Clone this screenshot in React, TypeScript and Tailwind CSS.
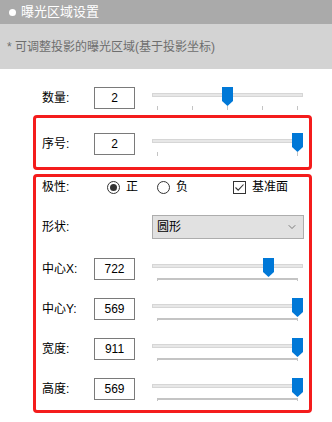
import { ChevronDown } from "lucide-react";

const FONT = "font-['Liberation_Sans','Noto_Sans_CJK_SC',sans-serif]";

interface SliderProps {
  value: number; // 0..1
  ticks?: number;
  bar?: boolean;
}

function Slider({ value, ticks = 5, bar = false }: SliderProps) {
  return (
    <div className="relative ml-[17px] w-[151px] shrink-0 flex flex-col">
      <div className="mt-[6px] h-[4px] bg-[#e7e7e7] border border-[#d6d6d6]" />
      {bar ? (
        <div className="mt-[10px] mx-[5px] flex flex-col">
          <div className="h-[2px] bg-[#c4c4c4]" />
          <div className="flex justify-between">
            <div className="w-px h-px bg-[#c4c4c4]" />
            <div className="w-px h-px bg-[#c4c4c4]" />
          </div>
        </div>
      ) : (
        <div className="mt-[9px] mx-[5px] flex justify-between">
          {Array.from({ length: ticks }).map((_, i) => (
            <div key={i} className="w-px h-[4px] bg-[#c4c4c4]" />
          ))}
        </div>
      )}
      {/* thumb */}
      <svg
        width="11"
        height="19"
        viewBox="0 0 11 19"
        className="absolute top-0"
        style={{ left: 140 * value }}
      >
        <path d="M0 0H11V14L5.5 19L0 14Z" fill="#0078d7" />
      </svg>
    </div>
  );
}

function NumBox({ value }: { value: string }) {
  return (
    <div className="w-[41px] h-[22px] shrink-0 border border-[#7a7a7a] flex items-center justify-center text-[12px] text-black">
      {value}
    </div>
  );
}

function SliderRow({ label, value, pos, ticks, bar }: { label: string; value: string; pos: number; ticks?: number; bar?: boolean }) {
  return (
    <div className="flex items-start">
      <div className="w-[52px] h-[22px] shrink-0 flex items-center text-[12px] text-black whitespace-nowrap">{label}</div>
      <NumBox value={value} />
      <Slider value={pos} ticks={ticks} bar={bar} />
    </div>
  );
}

function Radio({ checked, label }: { checked: boolean; label: string }) {
  return (
    <div className="flex items-center shrink-0">
      <div className="w-[13px] h-[13px] rounded-full border border-[#333] flex items-center justify-center">
        {checked && <div className="w-[7px] h-[7px] rounded-full bg-[#333]" />}
      </div>
      <span className="ml-[6px] text-[12px] text-black">{label}</span>
    </div>
  );
}

export default function App() {
  return (
    <div className={`w-[332px] h-[422px] bg-white ${FONT}`}>
      {/* Header */}
      <div className="h-[24px] bg-[#aaaaaa] flex items-center pl-[9px] text-white text-[13px]">
        <div className="w-[7px] h-[7px] rounded-full bg-white mr-[5px]" />
        曝光区域设置
      </div>
      <div className="h-[45px] bg-[#d3d3d3] flex items-center pl-[7px] text-[12px] text-[#6e6e6e]">
        * 可调整投影的曝光区域(基于投影坐标)
      </div>

      <div className="pl-[33px] pr-[20px]">
        {/* 数量 */}
        <div className="pt-[18px] pl-[9px]">
          <SliderRow label="数量:" value="2" pos={0.5} />
        </div>

        {/* 序号 */}
        <div className="mt-[5px] h-[55px] border-[3px] border-[#f41c1c] rounded-[4px] pl-[6px] pt-[15px]">
          <SliderRow label="序号:" value="2" pos={1} ticks={2} />
        </div>

        {/* 参数 */}
        <div className="mt-[4px] border-[3px] border-[#f41c1c] rounded-[4px] pl-[6px] pb-[9px] flex flex-col">
          <div className="h-[20px] flex items-center whitespace-nowrap">
            <div className="w-[65px] shrink-0 text-[12px] text-black">极性:</div>
            <Radio checked label="正" />
            <div className="ml-[19px]">
              <Radio checked={false} label="负" />
            </div>
            <div className="ml-[45px] flex items-center shrink-0">
              <div className="w-[13px] h-[13px] border border-[#333] flex items-center justify-center">
                <svg width="11" height="11" viewBox="0 0 11 11">
                  <path d="M1.5 5.5L4.2 8.2L9.5 2.5" fill="none" stroke="#333" strokeWidth="1.1" />
                </svg>
              </div>
              <span className="ml-[6px] text-[12px] text-black">基准面</span>
            </div>
          </div>

          <div className="mt-[18px] flex items-center">
            <div className="w-[110px] shrink-0 text-[12px] text-black">形状:</div>
            <div className="w-[152px] h-[24px] shrink-0 bg-[#e1e1e1] border border-[#adadad] flex items-center justify-between pl-[4px] pr-[5px] text-[12px] text-black">
              <span>圆形</span>
              <ChevronDown size={12} strokeWidth={1.3} color="#444" />
            </div>
          </div>

          <div className="mt-[19px] flex flex-col gap-[17px]">
            <SliderRow label="中心X:" value="722" pos={0.79} bar />
            <SliderRow label="中心Y:" value="569" pos={1} bar />
            <SliderRow label="宽度:" value="911" pos={1} bar />
            <SliderRow label="高度:" value="569" pos={1} bar />
          </div>
        </div>
      </div>
    </div>
  );
}
